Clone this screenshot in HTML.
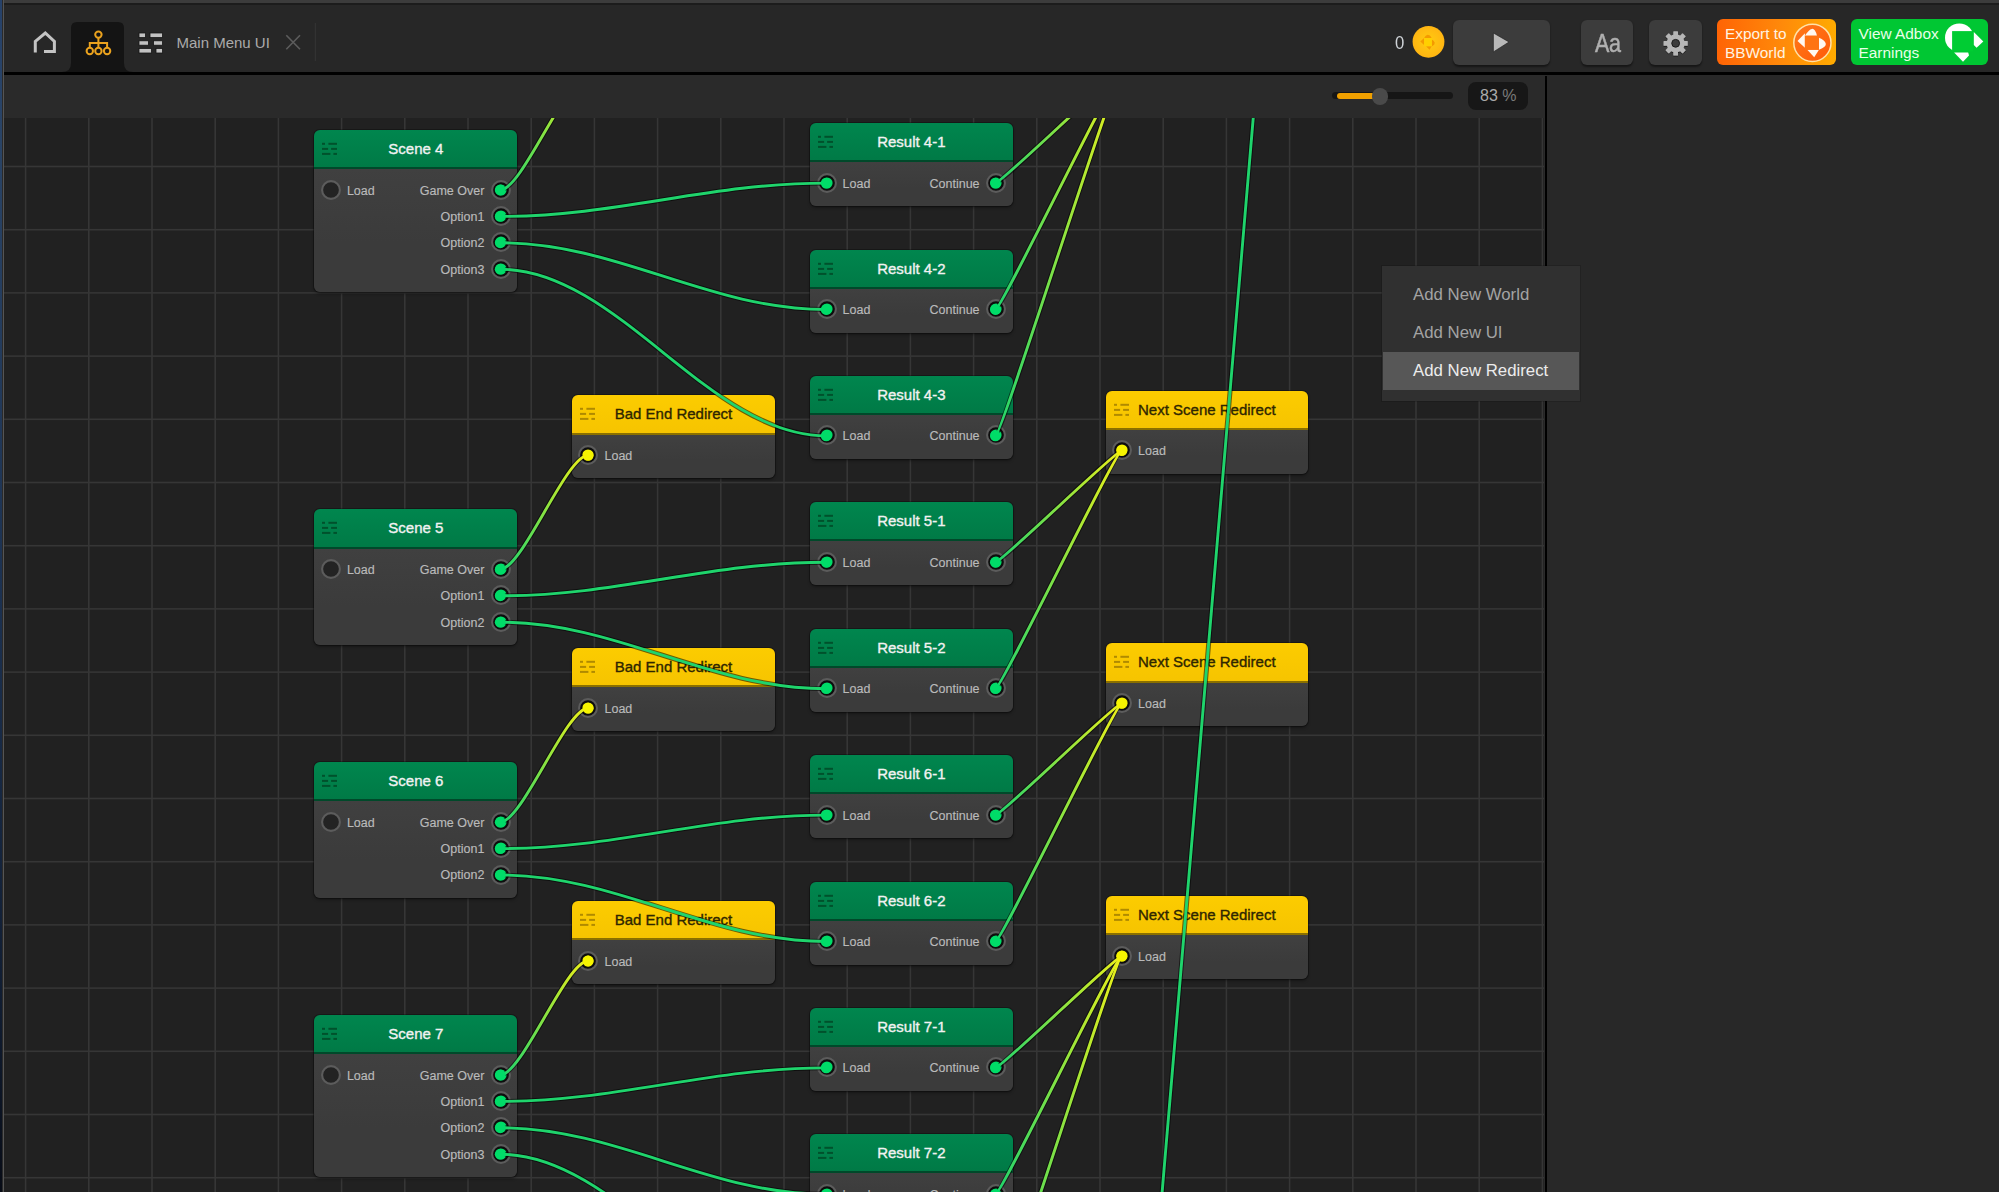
<!DOCTYPE html>
<html><head><meta charset="utf-8"><title>Mind Map</title>
<style>
*{margin:0;padding:0;box-sizing:border-box}
html,body{width:1999px;height:1192px;overflow:hidden;background:#2a2a2a;font-family:"Liberation Sans",sans-serif}
.abs{position:absolute}
#strip{left:0;top:0;width:2.4px;height:1192px;background:linear-gradient(#27426a,#2a4466 12%,#1c3150 50%,#101c30 85%,#080c16)}
#strip2{left:3px;top:0;width:1.4px;height:1192px;background:#555}
#topgray{left:4.4px;top:0;width:1995px;height:3px;background:#3c3c3c}
#topblk{left:4.4px;top:3px;width:1995px;height:2px;background:#1c1c1c}
#tb{left:4.4px;top:5px;width:1995px;height:67px;background:#272727}
#tbline{left:4.4px;top:72.4px;width:1995px;height:2.8px;background:#000}
#tb2{left:5px;top:75.2px;width:1540px;height:42px;background:#2a2a2a}
#vline{left:1544.5px;top:75.5px;width:2.5px;height:1117px;background:#000}
#rpanel{left:1547px;top:75.2px;width:452px;height:1117px;background:#282828}
#canvas{left:4.4px;top:117.5px;width:1540.1px;height:1075px;background:#212121;overflow:hidden}
.node{position:absolute;border-radius:6px;box-shadow:0 0 0 1px rgba(0,0,0,.28),0 2px 3px rgba(0,0,0,.35)}
.hdr{position:absolute;left:0;top:0;right:0;height:39.2px;border-radius:6px 6px 0 0;border-bottom:2px solid rgba(0,0,0,.45)}
.hdr.g{background:linear-gradient(#00864e,#007a46)}
.hdr.y{background:linear-gradient(#fccc00,#f6c400)}
.body{position:absolute;left:0;right:0;top:39.2px;bottom:0;border-radius:0 0 6px 6px;background:linear-gradient(#404040,#3b3b3b 60%)}
.ttl{position:absolute;left:0;right:0;top:0px;height:37px;line-height:37px;text-align:center;font-size:15px;white-space:nowrap}
.g .ttl{color:#f2f2f2}
.ttl.g{color:#f2f2f2;-webkit-text-stroke:.35px #f2f2f2}
.ttl.y{color:#2e2600;-webkit-text-stroke:.35px #2e2600}
.lbl{position:absolute;font-size:12.5px;color:#bababa;white-space:nowrap;line-height:14px;-webkit-text-stroke:.15px #bababa}
.ico{position:absolute;left:8px;top:12px;width:15px;height:13px}
.menu{left:1381.5px;top:266px;width:198.5px;height:134.5px;background:#303030;box-shadow:0 0 0 1px rgba(0,0,0,.15)}
.mi{position:absolute;left:31.5px;font-size:16.8px;color:#a3a3a3;white-space:nowrap;line-height:20px}
.btn{position:absolute;border-radius:6px;background:#3c3c3c;box-shadow:0 1.5px 2px rgba(0,0,0,.45)}
</style></head><body>

<div id="strip" class="abs"></div><div id="strip2" class="abs"></div>
<div id="topgray" class="abs"></div><div id="topblk" class="abs"></div>
<div id="tb" class="abs"></div>
<svg class="abs" style="left:0;top:0" width="340" height="76" viewBox="0 0 340 76">
<path d="M62 72 Q71 72 71 63 L71 28 Q71 22 77 22 L118 22 Q124 22 124 28 L124 63 Q124 72 133 72 Z" fill="#141414"/>
<path d="M35.3 52.6 L35.3 41.4 L45.3 33 L54.4 41.4 L54.4 51.6 L44 51.6" fill="none" stroke="#c4c4c4" stroke-width="3" stroke-linejoin="miter"/>
<g stroke="#eaa21e" stroke-width="2" fill="none">
<circle cx="98.4" cy="34.6" r="3.2"/>
<path d="M98.4 37.8 V47.8 M89.8 47.8 V43 H107.1 V47.8"/>
<circle cx="89.8" cy="51" r="3.2"/><circle cx="98.4" cy="51" r="3.2"/><circle cx="107.1" cy="51" r="3.2"/>
</g>
<g fill="#c2c2c2" stroke="#151515" stroke-width="0.8">
<rect x="139" y="33" width="6.5" height="4.6"/><rect x="150" y="33" width="12.5" height="4.6"/>
<rect x="139" y="40.8" width="9.5" height="4.4"/><rect x="153.5" y="40.8" width="9" height="4.4"/>
<rect x="139" y="48.4" width="12.5" height="4.6"/><rect x="156" y="48.4" width="6.5" height="4.6"/>
</g>
<path d="M286.3 35.2 L300 49.2 M300 35.2 L286.3 49.2" stroke="#5c5c5c" stroke-width="1.6"/>
<rect x="314.8" y="23" width="1" height="38" fill="#363636"/>
</svg>
<div class="abs" style="left:176.5px;top:34px;font-size:15px;color:#ababab;line-height:18px;white-space:nowrap">Main Menu UI</div>
<div class="abs" style="left:1394.8px;top:31.5px;font-size:19px;color:#cfd3d8;line-height:22px;transform:scaleX(.88);transform-origin:0 0">0</div>
<svg class="abs" style="left:1410px;top:23px" width="38" height="38" viewBox="0 0 38 38">
<defs><radialGradient id="coin" cx="50%" cy="50%" r="50%"><stop offset="0" stop-color="#ffcc10"/><stop offset="1" stop-color="#ffb512"/></radialGradient></defs>
<circle cx="18.5" cy="18.8" r="15.9" fill="url(#coin)"/>
<g fill="#f39600" opacity=".9">
<path d="M14.1 15 L14.1 22 L10.3 18.5Z"/>
<path d="M14.1 15.1 L21.7 15.1 Q20 11.5 17.6 11.7 Q15.5 12 14.1 15.1Z"/>
<path d="M21.8 16.5 L21.8 23.2 Q25 22 24.6 19.5 Q24 17.5 21.8 16.5Z"/>
<path d="M16 23.2 L21.8 23.2 L19.5 26.7Z"/>
</g>
<rect x="14.1" y="15.1" width="7.7" height="8.1" fill="#ffd000"/>
</svg>
<div class="btn" style="left:1453px;top:19.5px;width:96.5px;height:45px"></div>
<svg class="abs" style="left:1490px;top:30px" width="24" height="26"><path d="M3.4 3 L19 12 L3.4 21.9Z" fill="#b8b8b8" stroke="#161616" stroke-width=".6"/></svg>
<div class="btn" style="left:1581px;top:19.5px;width:52px;height:45px"></div>
<div class="abs" style="left:1594.5px;top:29px;font-size:25px;color:#b0b0b0;line-height:28px;white-space:nowrap;letter-spacing:-0.3px;-webkit-text-stroke:.5px #b0b0b0;transform:scaleX(.86);transform-origin:0 0">Aa</div>
<div class="btn" style="left:1649px;top:19.5px;width:53px;height:45px"></div>
<svg class="abs" style="left:1655px;top:23px" width="42" height="42" viewBox="0 0 42 42">
<defs><filter id="gsh" x="-30%" y="-30%" width="160%" height="160%"><feDropShadow dx="0" dy="0.8" stdDeviation="0.7" flood-color="#000" flood-opacity=".75"/></filter></defs>
<g fill="#b6b6b6" filter="url(#gsh)" transform="translate(20.65 20.3)">
<circle r="9"/>
<rect x="-2.35" y="-12.1" width="4.7" height="24.2" rx=".5"/>
<rect x="-2.35" y="-12.1" width="4.7" height="24.2" rx=".5" transform="rotate(45)"/>
<rect x="-2.35" y="-12.1" width="4.7" height="24.2" rx=".5" transform="rotate(90)"/>
<rect x="-2.35" y="-12.1" width="4.7" height="24.2" rx=".5" transform="rotate(135)"/>
</g>
<circle cx="20.65" cy="20.3" r="3.9" fill="#3c3c3c" stroke="#1a1a1a" stroke-width="1"/>
</svg>
<div class="abs" style="left:1717px;top:19px;width:119px;height:46px;border-radius:6px;background:linear-gradient(90deg,#ff6405,#ff8a0a 55%,#ffab00)"></div>
<div class="abs" style="left:1725px;top:24px;font-size:15.4px;line-height:19px;color:#fff3e2;white-space:nowrap">Export to<br>BBWorld</div>
<svg class="abs" style="left:1790px;top:20px" width="46" height="46" viewBox="0 0 46 46">
<defs><linearGradient id="eg" x1="0" y1="0" x2="1" y2="1"><stop offset="0" stop-color="#ff7a1a"/><stop offset="1" stop-color="#ff5a08"/></linearGradient></defs>
<circle cx="22.4" cy="22.8" r="18.6" fill="url(#eg)" stroke="#ffe2a8" stroke-width="1.5"/>
<g fill="#fff8f0">
<path d="M14.9 13.3 L14.9 27.8 L7.5 20.9Z"/>
<path d="M14.9 15.7 L27 15.7 Q25 8.2 21.8 8.9 Q19 9.3 14.9 15.7Z"/>
<path d="M29 17.7 L29 29.8 Q36.5 27 35.8 23.8 Q35 20 29 17.7Z"/>
<path d="M17.3 29.8 L29 29.8 L24.2 37.3Z"/>
</g>
<rect x="14.9" y="15.7" width="14.1" height="14.1" fill="#ff7412"/>
</svg>
<div class="abs" style="left:1851px;top:19.3px;width:137px;height:45.5px;border-radius:6px;background:#00c733"></div>
<div class="abs" style="left:1858.5px;top:24px;font-size:15.4px;line-height:19px;color:#e8ffe8;white-space:nowrap">View Adbox<br>Earnings</div>
<svg class="abs" style="left:1940px;top:18px" width="52" height="48" viewBox="0 0 52 48">
<defs><clipPath id="adc"><rect x="0" y="0" width="32.2" height="32.6"/></clipPath></defs>
<circle cx="19.3" cy="19.7" r="14.3" fill="#fff" clip-path="url(#adc)"/>
<rect x="12.1" y="13.1" width="20.9" height="20.3" fill="#00cc33"/>
<path d="M33.8 14.1 L43.3 23.6 L36.6 29.8 L33.8 27Z" fill="#fff"/>
<path d="M14.1 34.4 L28.2 34.4 L29 37.5 L23 43.7Z" fill="#fff"/>
</svg>
<div id="tbline" class="abs"></div>
<div id="tb2" class="abs"></div>
<div id="rpanel" class="abs"></div>
<div class="abs" style="left:1331.5px;top:92.2px;width:121px;height:6.6px;border-radius:4px;background:#161616"></div>
<div class="abs" style="left:1337px;top:92.6px;width:38px;height:6.6px;border-radius:3.5px;background:#f0a000"></div>
<div class="abs" style="left:1371.6px;top:88px;width:16.8px;height:16.8px;border-radius:50%;background:#4a4a4a"></div>
<div class="abs" style="left:1468.3px;top:82px;width:60px;height:28.2px;border-radius:8px;background:#171717"></div>
<div class="abs" style="left:1480px;top:87px;font-size:16px;line-height:18px;white-space:nowrap;color:#ababab">83 <span style="color:#7a7a7a">%</span></div>

<div id="canvas" class="abs">
<svg class="abs" style="left:0;top:0" width="1540" height="1075"><rect x="20.8" y="0" width="1.6" height="1075" fill="#363636"/><rect x="84" y="0" width="1.6" height="1075" fill="#363636"/><rect x="147.2" y="0" width="1.6" height="1075" fill="#363636"/><rect x="210.4" y="0" width="1.6" height="1075" fill="#363636"/><rect x="273.6" y="0" width="1.6" height="1075" fill="#363636"/><rect x="336.8" y="0" width="1.6" height="1075" fill="#363636"/><rect x="400" y="0" width="1.6" height="1075" fill="#363636"/><rect x="463.2" y="0" width="1.6" height="1075" fill="#363636"/><rect x="526.4" y="0" width="1.6" height="1075" fill="#363636"/><rect x="589.6" y="0" width="1.6" height="1075" fill="#363636"/><rect x="652.8" y="0" width="1.6" height="1075" fill="#363636"/><rect x="716" y="0" width="1.6" height="1075" fill="#363636"/><rect x="779.2" y="0" width="1.6" height="1075" fill="#363636"/><rect x="842.4" y="0" width="1.6" height="1075" fill="#363636"/><rect x="905.6" y="0" width="1.6" height="1075" fill="#363636"/><rect x="968.8" y="0" width="1.6" height="1075" fill="#363636"/><rect x="1032" y="0" width="1.6" height="1075" fill="#363636"/><rect x="1095.2" y="0" width="1.6" height="1075" fill="#363636"/><rect x="1158.4" y="0" width="1.6" height="1075" fill="#363636"/><rect x="1221.6" y="0" width="1.6" height="1075" fill="#363636"/><rect x="1284.8" y="0" width="1.6" height="1075" fill="#363636"/><rect x="1348" y="0" width="1.6" height="1075" fill="#363636"/><rect x="1411.2" y="0" width="1.6" height="1075" fill="#363636"/><rect x="1474.4" y="0" width="1.6" height="1075" fill="#363636"/><rect x="1537.6" y="0" width="1.6" height="1075" fill="#363636"/><rect x="0" y="47.7" width="1540" height="1.6" fill="#363636"/><rect x="0" y="110.9" width="1540" height="1.6" fill="#363636"/><rect x="0" y="174.1" width="1540" height="1.6" fill="#363636"/><rect x="0" y="237.3" width="1540" height="1.6" fill="#363636"/><rect x="0" y="300.5" width="1540" height="1.6" fill="#363636"/><rect x="0" y="363.7" width="1540" height="1.6" fill="#363636"/><rect x="0" y="426.9" width="1540" height="1.6" fill="#363636"/><rect x="0" y="490.1" width="1540" height="1.6" fill="#363636"/><rect x="0" y="553.3" width="1540" height="1.6" fill="#363636"/><rect x="0" y="616.5" width="1540" height="1.6" fill="#363636"/><rect x="0" y="679.7" width="1540" height="1.6" fill="#363636"/><rect x="0" y="742.9" width="1540" height="1.6" fill="#363636"/><rect x="0" y="806.1" width="1540" height="1.6" fill="#363636"/><rect x="0" y="869.3" width="1540" height="1.6" fill="#363636"/><rect x="0" y="932.5" width="1540" height="1.6" fill="#363636"/><rect x="0" y="995.7" width="1540" height="1.6" fill="#363636"/><rect x="0" y="1058.9" width="1540" height="1.6" fill="#363636"/></svg>
<div class="node" style="left:310px;top:12.5px;width:203px;height:162.2px">
<div class="hdr g">
<svg class="ico" viewBox="0 0 15 13"><g fill="#00512c"><rect x="0" y="0.8" width="3" height="2"/><rect x="6.4" y="0.8" width="8.7" height="2"/><rect x="0" y="5.9" width="6.1" height="2"/><rect x="9.1" y="5.9" width="6" height="2"/><rect x="0" y="10.9" width="8.4" height="2"/><rect x="11.4" y="10.9" width="3.7" height="2"/></g></svg>
<div class="ttl g">Scene 4</div>
</div><div class="body"></div>
<div class="lbl" style="left:32.5px;top:53.5px">Load</div>
<div class="lbl" style="right:33px;top:53.5px">Game Over</div>
<div class="lbl" style="right:33px;top:79.9px">Option1</div>
<div class="lbl" style="right:33px;top:106.3px">Option2</div>
<div class="lbl" style="right:33px;top:132.7px">Option3</div>
</div>
<div class="node" style="left:310px;top:391.9px;width:203px;height:135.8px">
<div class="hdr g">
<svg class="ico" viewBox="0 0 15 13"><g fill="#00512c"><rect x="0" y="0.8" width="3" height="2"/><rect x="6.4" y="0.8" width="8.7" height="2"/><rect x="0" y="5.9" width="6.1" height="2"/><rect x="9.1" y="5.9" width="6" height="2"/><rect x="0" y="10.9" width="8.4" height="2"/><rect x="11.4" y="10.9" width="3.7" height="2"/></g></svg>
<div class="ttl g">Scene 5</div>
</div><div class="body"></div>
<div class="lbl" style="left:32.5px;top:53.5px">Load</div>
<div class="lbl" style="right:33px;top:53.5px">Game Over</div>
<div class="lbl" style="right:33px;top:79.9px">Option1</div>
<div class="lbl" style="right:33px;top:106.3px">Option2</div>
</div>
<div class="node" style="left:310px;top:644.7px;width:203px;height:135.8px">
<div class="hdr g">
<svg class="ico" viewBox="0 0 15 13"><g fill="#00512c"><rect x="0" y="0.8" width="3" height="2"/><rect x="6.4" y="0.8" width="8.7" height="2"/><rect x="0" y="5.9" width="6.1" height="2"/><rect x="9.1" y="5.9" width="6" height="2"/><rect x="0" y="10.9" width="8.4" height="2"/><rect x="11.4" y="10.9" width="3.7" height="2"/></g></svg>
<div class="ttl g">Scene 6</div>
</div><div class="body"></div>
<div class="lbl" style="left:32.5px;top:53.5px">Load</div>
<div class="lbl" style="right:33px;top:53.5px">Game Over</div>
<div class="lbl" style="right:33px;top:79.9px">Option1</div>
<div class="lbl" style="right:33px;top:106.3px">Option2</div>
</div>
<div class="node" style="left:310px;top:897.5px;width:203px;height:162.2px">
<div class="hdr g">
<svg class="ico" viewBox="0 0 15 13"><g fill="#00512c"><rect x="0" y="0.8" width="3" height="2"/><rect x="6.4" y="0.8" width="8.7" height="2"/><rect x="0" y="5.9" width="6.1" height="2"/><rect x="9.1" y="5.9" width="6" height="2"/><rect x="0" y="10.9" width="8.4" height="2"/><rect x="11.4" y="10.9" width="3.7" height="2"/></g></svg>
<div class="ttl g">Scene 7</div>
</div><div class="body"></div>
<div class="lbl" style="left:32.5px;top:53.5px">Load</div>
<div class="lbl" style="right:33px;top:53.5px">Game Over</div>
<div class="lbl" style="right:33px;top:79.9px">Option1</div>
<div class="lbl" style="right:33px;top:106.3px">Option2</div>
<div class="lbl" style="right:33px;top:132.7px">Option3</div>
</div>
<div class="node" style="left:567.6px;top:277.9px;width:203px;height:83px">
<div class="hdr y">
<svg class="ico" viewBox="0 0 15 13"><g fill="#b08a00"><rect x="0" y="0.8" width="3" height="2"/><rect x="6.4" y="0.8" width="8.7" height="2"/><rect x="0" y="5.9" width="6.1" height="2"/><rect x="9.1" y="5.9" width="6" height="2"/><rect x="0" y="10.9" width="8.4" height="2"/><rect x="11.4" y="10.9" width="3.7" height="2"/></g></svg>
<div class="ttl y">Bad End Redirect</div>
</div><div class="body"></div>
<div class="lbl" style="left:32.5px;top:53.5px">Load</div>
</div>
<div class="node" style="left:567.6px;top:530.7px;width:203px;height:83px">
<div class="hdr y">
<svg class="ico" viewBox="0 0 15 13"><g fill="#b08a00"><rect x="0" y="0.8" width="3" height="2"/><rect x="6.4" y="0.8" width="8.7" height="2"/><rect x="0" y="5.9" width="6.1" height="2"/><rect x="9.1" y="5.9" width="6" height="2"/><rect x="0" y="10.9" width="8.4" height="2"/><rect x="11.4" y="10.9" width="3.7" height="2"/></g></svg>
<div class="ttl y">Bad End Redirect</div>
</div><div class="body"></div>
<div class="lbl" style="left:32.5px;top:53.5px">Load</div>
</div>
<div class="node" style="left:567.6px;top:783.5px;width:203px;height:83px">
<div class="hdr y">
<svg class="ico" viewBox="0 0 15 13"><g fill="#b08a00"><rect x="0" y="0.8" width="3" height="2"/><rect x="6.4" y="0.8" width="8.7" height="2"/><rect x="0" y="5.9" width="6.1" height="2"/><rect x="9.1" y="5.9" width="6" height="2"/><rect x="0" y="10.9" width="8.4" height="2"/><rect x="11.4" y="10.9" width="3.7" height="2"/></g></svg>
<div class="ttl y">Bad End Redirect</div>
</div><div class="body"></div>
<div class="lbl" style="left:32.5px;top:53.5px">Load</div>
</div>
<div class="node" style="left:805.7px;top:5.6px;width:202.5px;height:83px">
<div class="hdr g">
<svg class="ico" viewBox="0 0 15 13"><g fill="#00512c"><rect x="0" y="0.8" width="3" height="2"/><rect x="6.4" y="0.8" width="8.7" height="2"/><rect x="0" y="5.9" width="6.1" height="2"/><rect x="9.1" y="5.9" width="6" height="2"/><rect x="0" y="10.9" width="8.4" height="2"/><rect x="11.4" y="10.9" width="3.7" height="2"/></g></svg>
<div class="ttl g">Result 4-1</div>
</div><div class="body"></div>
<div class="lbl" style="left:32.5px;top:53.5px">Load</div>
<div class="lbl" style="right:33px;top:53.5px">Continue</div>
</div>
<div class="node" style="left:805.7px;top:132px;width:202.5px;height:83px">
<div class="hdr g">
<svg class="ico" viewBox="0 0 15 13"><g fill="#00512c"><rect x="0" y="0.8" width="3" height="2"/><rect x="6.4" y="0.8" width="8.7" height="2"/><rect x="0" y="5.9" width="6.1" height="2"/><rect x="9.1" y="5.9" width="6" height="2"/><rect x="0" y="10.9" width="8.4" height="2"/><rect x="11.4" y="10.9" width="3.7" height="2"/></g></svg>
<div class="ttl g">Result 4-2</div>
</div><div class="body"></div>
<div class="lbl" style="left:32.5px;top:53.5px">Load</div>
<div class="lbl" style="right:33px;top:53.5px">Continue</div>
</div>
<div class="node" style="left:805.7px;top:258.4px;width:202.5px;height:83px">
<div class="hdr g">
<svg class="ico" viewBox="0 0 15 13"><g fill="#00512c"><rect x="0" y="0.8" width="3" height="2"/><rect x="6.4" y="0.8" width="8.7" height="2"/><rect x="0" y="5.9" width="6.1" height="2"/><rect x="9.1" y="5.9" width="6" height="2"/><rect x="0" y="10.9" width="8.4" height="2"/><rect x="11.4" y="10.9" width="3.7" height="2"/></g></svg>
<div class="ttl g">Result 4-3</div>
</div><div class="body"></div>
<div class="lbl" style="left:32.5px;top:53.5px">Load</div>
<div class="lbl" style="right:33px;top:53.5px">Continue</div>
</div>
<div class="node" style="left:805.7px;top:384.8px;width:202.5px;height:83px">
<div class="hdr g">
<svg class="ico" viewBox="0 0 15 13"><g fill="#00512c"><rect x="0" y="0.8" width="3" height="2"/><rect x="6.4" y="0.8" width="8.7" height="2"/><rect x="0" y="5.9" width="6.1" height="2"/><rect x="9.1" y="5.9" width="6" height="2"/><rect x="0" y="10.9" width="8.4" height="2"/><rect x="11.4" y="10.9" width="3.7" height="2"/></g></svg>
<div class="ttl g">Result 5-1</div>
</div><div class="body"></div>
<div class="lbl" style="left:32.5px;top:53.5px">Load</div>
<div class="lbl" style="right:33px;top:53.5px">Continue</div>
</div>
<div class="node" style="left:805.7px;top:511.2px;width:202.5px;height:83px">
<div class="hdr g">
<svg class="ico" viewBox="0 0 15 13"><g fill="#00512c"><rect x="0" y="0.8" width="3" height="2"/><rect x="6.4" y="0.8" width="8.7" height="2"/><rect x="0" y="5.9" width="6.1" height="2"/><rect x="9.1" y="5.9" width="6" height="2"/><rect x="0" y="10.9" width="8.4" height="2"/><rect x="11.4" y="10.9" width="3.7" height="2"/></g></svg>
<div class="ttl g">Result 5-2</div>
</div><div class="body"></div>
<div class="lbl" style="left:32.5px;top:53.5px">Load</div>
<div class="lbl" style="right:33px;top:53.5px">Continue</div>
</div>
<div class="node" style="left:805.7px;top:637.6px;width:202.5px;height:83px">
<div class="hdr g">
<svg class="ico" viewBox="0 0 15 13"><g fill="#00512c"><rect x="0" y="0.8" width="3" height="2"/><rect x="6.4" y="0.8" width="8.7" height="2"/><rect x="0" y="5.9" width="6.1" height="2"/><rect x="9.1" y="5.9" width="6" height="2"/><rect x="0" y="10.9" width="8.4" height="2"/><rect x="11.4" y="10.9" width="3.7" height="2"/></g></svg>
<div class="ttl g">Result 6-1</div>
</div><div class="body"></div>
<div class="lbl" style="left:32.5px;top:53.5px">Load</div>
<div class="lbl" style="right:33px;top:53.5px">Continue</div>
</div>
<div class="node" style="left:805.7px;top:764px;width:202.5px;height:83px">
<div class="hdr g">
<svg class="ico" viewBox="0 0 15 13"><g fill="#00512c"><rect x="0" y="0.8" width="3" height="2"/><rect x="6.4" y="0.8" width="8.7" height="2"/><rect x="0" y="5.9" width="6.1" height="2"/><rect x="9.1" y="5.9" width="6" height="2"/><rect x="0" y="10.9" width="8.4" height="2"/><rect x="11.4" y="10.9" width="3.7" height="2"/></g></svg>
<div class="ttl g">Result 6-2</div>
</div><div class="body"></div>
<div class="lbl" style="left:32.5px;top:53.5px">Load</div>
<div class="lbl" style="right:33px;top:53.5px">Continue</div>
</div>
<div class="node" style="left:805.7px;top:890.4px;width:202.5px;height:83px">
<div class="hdr g">
<svg class="ico" viewBox="0 0 15 13"><g fill="#00512c"><rect x="0" y="0.8" width="3" height="2"/><rect x="6.4" y="0.8" width="8.7" height="2"/><rect x="0" y="5.9" width="6.1" height="2"/><rect x="9.1" y="5.9" width="6" height="2"/><rect x="0" y="10.9" width="8.4" height="2"/><rect x="11.4" y="10.9" width="3.7" height="2"/></g></svg>
<div class="ttl g">Result 7-1</div>
</div><div class="body"></div>
<div class="lbl" style="left:32.5px;top:53.5px">Load</div>
<div class="lbl" style="right:33px;top:53.5px">Continue</div>
</div>
<div class="node" style="left:805.7px;top:1016.8px;width:202.5px;height:83px">
<div class="hdr g">
<svg class="ico" viewBox="0 0 15 13"><g fill="#00512c"><rect x="0" y="0.8" width="3" height="2"/><rect x="6.4" y="0.8" width="8.7" height="2"/><rect x="0" y="5.9" width="6.1" height="2"/><rect x="9.1" y="5.9" width="6" height="2"/><rect x="0" y="10.9" width="8.4" height="2"/><rect x="11.4" y="10.9" width="3.7" height="2"/></g></svg>
<div class="ttl g">Result 7-2</div>
</div><div class="body"></div>
<div class="lbl" style="left:32.5px;top:53.5px">Load</div>
<div class="lbl" style="right:33px;top:53.5px">Continue</div>
</div>
<div class="node" style="left:1101.2px;top:273.1px;width:202.5px;height:83px">
<div class="hdr y">
<svg class="ico" viewBox="0 0 15 13"><g fill="#b08a00"><rect x="0" y="0.8" width="3" height="2"/><rect x="6.4" y="0.8" width="8.7" height="2"/><rect x="0" y="5.9" width="6.1" height="2"/><rect x="9.1" y="5.9" width="6" height="2"/><rect x="0" y="10.9" width="8.4" height="2"/><rect x="11.4" y="10.9" width="3.7" height="2"/></g></svg>
<div class="ttl y">Next Scene Redirect</div>
</div><div class="body"></div>
<div class="lbl" style="left:32.5px;top:53.5px">Load</div>
</div>
<div class="node" style="left:1101.2px;top:525.9px;width:202.5px;height:83px">
<div class="hdr y">
<svg class="ico" viewBox="0 0 15 13"><g fill="#b08a00"><rect x="0" y="0.8" width="3" height="2"/><rect x="6.4" y="0.8" width="8.7" height="2"/><rect x="0" y="5.9" width="6.1" height="2"/><rect x="9.1" y="5.9" width="6" height="2"/><rect x="0" y="10.9" width="8.4" height="2"/><rect x="11.4" y="10.9" width="3.7" height="2"/></g></svg>
<div class="ttl y">Next Scene Redirect</div>
</div><div class="body"></div>
<div class="lbl" style="left:32.5px;top:53.5px">Load</div>
</div>
<div class="node" style="left:1101.2px;top:778.7px;width:202.5px;height:83px">
<div class="hdr y">
<svg class="ico" viewBox="0 0 15 13"><g fill="#b08a00"><rect x="0" y="0.8" width="3" height="2"/><rect x="6.4" y="0.8" width="8.7" height="2"/><rect x="0" y="5.9" width="6.1" height="2"/><rect x="9.1" y="5.9" width="6" height="2"/><rect x="0" y="10.9" width="8.4" height="2"/><rect x="11.4" y="10.9" width="3.7" height="2"/></g></svg>
<div class="ttl y">Next Scene Redirect</div>
</div><div class="body"></div>
<div class="lbl" style="left:32.5px;top:53.5px">Load</div>
</div>
<svg class="abs" style="left:314.5px;top:60px" width="24" height="24" viewBox="0 0 24 24"><circle cx="12" cy="12" r="8.9" fill="#232323" stroke="#5c5c5c" stroke-width="2.1"/></svg>
<svg class="abs" style="left:484.2px;top:60px" width="24" height="24" viewBox="0 0 24 24"><circle cx="12" cy="12" r="8.9" fill="#0d0d0d" stroke="#5c5c5c" stroke-width="2.1"/><circle cx="12" cy="12" r="5.6" fill="#00dc68"/></svg>
<svg class="abs" style="left:484.2px;top:86.4px" width="24" height="24" viewBox="0 0 24 24"><circle cx="12" cy="12" r="8.9" fill="#0d0d0d" stroke="#5c5c5c" stroke-width="2.1"/><circle cx="12" cy="12" r="5.6" fill="#00dc68"/></svg>
<svg class="abs" style="left:484.2px;top:112.8px" width="24" height="24" viewBox="0 0 24 24"><circle cx="12" cy="12" r="8.9" fill="#0d0d0d" stroke="#5c5c5c" stroke-width="2.1"/><circle cx="12" cy="12" r="5.6" fill="#00dc68"/></svg>
<svg class="abs" style="left:484.2px;top:139.2px" width="24" height="24" viewBox="0 0 24 24"><circle cx="12" cy="12" r="8.9" fill="#0d0d0d" stroke="#5c5c5c" stroke-width="2.1"/><circle cx="12" cy="12" r="5.6" fill="#00dc68"/></svg>
<svg class="abs" style="left:314.5px;top:439.4px" width="24" height="24" viewBox="0 0 24 24"><circle cx="12" cy="12" r="8.9" fill="#232323" stroke="#5c5c5c" stroke-width="2.1"/></svg>
<svg class="abs" style="left:484.2px;top:439.4px" width="24" height="24" viewBox="0 0 24 24"><circle cx="12" cy="12" r="8.9" fill="#0d0d0d" stroke="#5c5c5c" stroke-width="2.1"/><circle cx="12" cy="12" r="5.6" fill="#00dc68"/></svg>
<svg class="abs" style="left:484.2px;top:465.8px" width="24" height="24" viewBox="0 0 24 24"><circle cx="12" cy="12" r="8.9" fill="#0d0d0d" stroke="#5c5c5c" stroke-width="2.1"/><circle cx="12" cy="12" r="5.6" fill="#00dc68"/></svg>
<svg class="abs" style="left:484.2px;top:492.2px" width="24" height="24" viewBox="0 0 24 24"><circle cx="12" cy="12" r="8.9" fill="#0d0d0d" stroke="#5c5c5c" stroke-width="2.1"/><circle cx="12" cy="12" r="5.6" fill="#00dc68"/></svg>
<svg class="abs" style="left:314.5px;top:692.2px" width="24" height="24" viewBox="0 0 24 24"><circle cx="12" cy="12" r="8.9" fill="#232323" stroke="#5c5c5c" stroke-width="2.1"/></svg>
<svg class="abs" style="left:484.2px;top:692.2px" width="24" height="24" viewBox="0 0 24 24"><circle cx="12" cy="12" r="8.9" fill="#0d0d0d" stroke="#5c5c5c" stroke-width="2.1"/><circle cx="12" cy="12" r="5.6" fill="#00dc68"/></svg>
<svg class="abs" style="left:484.2px;top:718.6px" width="24" height="24" viewBox="0 0 24 24"><circle cx="12" cy="12" r="8.9" fill="#0d0d0d" stroke="#5c5c5c" stroke-width="2.1"/><circle cx="12" cy="12" r="5.6" fill="#00dc68"/></svg>
<svg class="abs" style="left:484.2px;top:745px" width="24" height="24" viewBox="0 0 24 24"><circle cx="12" cy="12" r="8.9" fill="#0d0d0d" stroke="#5c5c5c" stroke-width="2.1"/><circle cx="12" cy="12" r="5.6" fill="#00dc68"/></svg>
<svg class="abs" style="left:314.5px;top:945px" width="24" height="24" viewBox="0 0 24 24"><circle cx="12" cy="12" r="8.9" fill="#232323" stroke="#5c5c5c" stroke-width="2.1"/></svg>
<svg class="abs" style="left:484.2px;top:945px" width="24" height="24" viewBox="0 0 24 24"><circle cx="12" cy="12" r="8.9" fill="#0d0d0d" stroke="#5c5c5c" stroke-width="2.1"/><circle cx="12" cy="12" r="5.6" fill="#00dc68"/></svg>
<svg class="abs" style="left:484.2px;top:971.4px" width="24" height="24" viewBox="0 0 24 24"><circle cx="12" cy="12" r="8.9" fill="#0d0d0d" stroke="#5c5c5c" stroke-width="2.1"/><circle cx="12" cy="12" r="5.6" fill="#00dc68"/></svg>
<svg class="abs" style="left:484.2px;top:997.8px" width="24" height="24" viewBox="0 0 24 24"><circle cx="12" cy="12" r="8.9" fill="#0d0d0d" stroke="#5c5c5c" stroke-width="2.1"/><circle cx="12" cy="12" r="5.6" fill="#00dc68"/></svg>
<svg class="abs" style="left:484.2px;top:1024.2px" width="24" height="24" viewBox="0 0 24 24"><circle cx="12" cy="12" r="8.9" fill="#0d0d0d" stroke="#5c5c5c" stroke-width="2.1"/><circle cx="12" cy="12" r="5.6" fill="#00dc68"/></svg>
<svg class="abs" style="left:572.1px;top:325.4px" width="24" height="24" viewBox="0 0 24 24"><circle cx="12" cy="12" r="8.9" fill="#0d0d0d" stroke="#5c5c5c" stroke-width="2.1"/><circle cx="12" cy="12" r="5.6" fill="#f6f400"/></svg>
<svg class="abs" style="left:572.1px;top:578.2px" width="24" height="24" viewBox="0 0 24 24"><circle cx="12" cy="12" r="8.9" fill="#0d0d0d" stroke="#5c5c5c" stroke-width="2.1"/><circle cx="12" cy="12" r="5.6" fill="#f6f400"/></svg>
<svg class="abs" style="left:572.1px;top:831px" width="24" height="24" viewBox="0 0 24 24"><circle cx="12" cy="12" r="8.9" fill="#0d0d0d" stroke="#5c5c5c" stroke-width="2.1"/><circle cx="12" cy="12" r="5.6" fill="#f6f400"/></svg>
<svg class="abs" style="left:810.2px;top:53.1px" width="24" height="24" viewBox="0 0 24 24"><circle cx="12" cy="12" r="8.9" fill="#0d0d0d" stroke="#5c5c5c" stroke-width="2.1"/><circle cx="12" cy="12" r="5.6" fill="#00dc68"/></svg>
<svg class="abs" style="left:979.4px;top:53.1px" width="24" height="24" viewBox="0 0 24 24"><circle cx="12" cy="12" r="8.9" fill="#0d0d0d" stroke="#5c5c5c" stroke-width="2.1"/><circle cx="12" cy="12" r="5.6" fill="#00dc68"/></svg>
<svg class="abs" style="left:810.2px;top:179.5px" width="24" height="24" viewBox="0 0 24 24"><circle cx="12" cy="12" r="8.9" fill="#0d0d0d" stroke="#5c5c5c" stroke-width="2.1"/><circle cx="12" cy="12" r="5.6" fill="#00dc68"/></svg>
<svg class="abs" style="left:979.4px;top:179.5px" width="24" height="24" viewBox="0 0 24 24"><circle cx="12" cy="12" r="8.9" fill="#0d0d0d" stroke="#5c5c5c" stroke-width="2.1"/><circle cx="12" cy="12" r="5.6" fill="#00dc68"/></svg>
<svg class="abs" style="left:810.2px;top:305.9px" width="24" height="24" viewBox="0 0 24 24"><circle cx="12" cy="12" r="8.9" fill="#0d0d0d" stroke="#5c5c5c" stroke-width="2.1"/><circle cx="12" cy="12" r="5.6" fill="#00dc68"/></svg>
<svg class="abs" style="left:979.4px;top:305.9px" width="24" height="24" viewBox="0 0 24 24"><circle cx="12" cy="12" r="8.9" fill="#0d0d0d" stroke="#5c5c5c" stroke-width="2.1"/><circle cx="12" cy="12" r="5.6" fill="#00dc68"/></svg>
<svg class="abs" style="left:810.2px;top:432.3px" width="24" height="24" viewBox="0 0 24 24"><circle cx="12" cy="12" r="8.9" fill="#0d0d0d" stroke="#5c5c5c" stroke-width="2.1"/><circle cx="12" cy="12" r="5.6" fill="#00dc68"/></svg>
<svg class="abs" style="left:979.4px;top:432.3px" width="24" height="24" viewBox="0 0 24 24"><circle cx="12" cy="12" r="8.9" fill="#0d0d0d" stroke="#5c5c5c" stroke-width="2.1"/><circle cx="12" cy="12" r="5.6" fill="#00dc68"/></svg>
<svg class="abs" style="left:810.2px;top:558.7px" width="24" height="24" viewBox="0 0 24 24"><circle cx="12" cy="12" r="8.9" fill="#0d0d0d" stroke="#5c5c5c" stroke-width="2.1"/><circle cx="12" cy="12" r="5.6" fill="#00dc68"/></svg>
<svg class="abs" style="left:979.4px;top:558.7px" width="24" height="24" viewBox="0 0 24 24"><circle cx="12" cy="12" r="8.9" fill="#0d0d0d" stroke="#5c5c5c" stroke-width="2.1"/><circle cx="12" cy="12" r="5.6" fill="#00dc68"/></svg>
<svg class="abs" style="left:810.2px;top:685.1px" width="24" height="24" viewBox="0 0 24 24"><circle cx="12" cy="12" r="8.9" fill="#0d0d0d" stroke="#5c5c5c" stroke-width="2.1"/><circle cx="12" cy="12" r="5.6" fill="#00dc68"/></svg>
<svg class="abs" style="left:979.4px;top:685.1px" width="24" height="24" viewBox="0 0 24 24"><circle cx="12" cy="12" r="8.9" fill="#0d0d0d" stroke="#5c5c5c" stroke-width="2.1"/><circle cx="12" cy="12" r="5.6" fill="#00dc68"/></svg>
<svg class="abs" style="left:810.2px;top:811.5px" width="24" height="24" viewBox="0 0 24 24"><circle cx="12" cy="12" r="8.9" fill="#0d0d0d" stroke="#5c5c5c" stroke-width="2.1"/><circle cx="12" cy="12" r="5.6" fill="#00dc68"/></svg>
<svg class="abs" style="left:979.4px;top:811.5px" width="24" height="24" viewBox="0 0 24 24"><circle cx="12" cy="12" r="8.9" fill="#0d0d0d" stroke="#5c5c5c" stroke-width="2.1"/><circle cx="12" cy="12" r="5.6" fill="#00dc68"/></svg>
<svg class="abs" style="left:810.2px;top:937.9px" width="24" height="24" viewBox="0 0 24 24"><circle cx="12" cy="12" r="8.9" fill="#0d0d0d" stroke="#5c5c5c" stroke-width="2.1"/><circle cx="12" cy="12" r="5.6" fill="#00dc68"/></svg>
<svg class="abs" style="left:979.4px;top:937.9px" width="24" height="24" viewBox="0 0 24 24"><circle cx="12" cy="12" r="8.9" fill="#0d0d0d" stroke="#5c5c5c" stroke-width="2.1"/><circle cx="12" cy="12" r="5.6" fill="#00dc68"/></svg>
<svg class="abs" style="left:810.2px;top:1064.3px" width="24" height="24" viewBox="0 0 24 24"><circle cx="12" cy="12" r="8.9" fill="#0d0d0d" stroke="#5c5c5c" stroke-width="2.1"/><circle cx="12" cy="12" r="5.6" fill="#00dc68"/></svg>
<svg class="abs" style="left:979.4px;top:1064.3px" width="24" height="24" viewBox="0 0 24 24"><circle cx="12" cy="12" r="8.9" fill="#0d0d0d" stroke="#5c5c5c" stroke-width="2.1"/><circle cx="12" cy="12" r="5.6" fill="#00dc68"/></svg>
<svg class="abs" style="left:1105.7px;top:320.6px" width="24" height="24" viewBox="0 0 24 24"><circle cx="12" cy="12" r="8.9" fill="#0d0d0d" stroke="#5c5c5c" stroke-width="2.1"/><circle cx="12" cy="12" r="5.6" fill="#f6f400"/></svg>
<svg class="abs" style="left:1105.7px;top:573.4px" width="24" height="24" viewBox="0 0 24 24"><circle cx="12" cy="12" r="8.9" fill="#0d0d0d" stroke="#5c5c5c" stroke-width="2.1"/><circle cx="12" cy="12" r="5.6" fill="#f6f400"/></svg>
<svg class="abs" style="left:1105.7px;top:826.2px" width="24" height="24" viewBox="0 0 24 24"><circle cx="12" cy="12" r="8.9" fill="#0d0d0d" stroke="#5c5c5c" stroke-width="2.1"/><circle cx="12" cy="12" r="5.6" fill="#f6f400"/></svg>
<svg class="abs" style="left:0;top:0" width="1540" height="1075" viewBox="4.4 117.5 1540 1075"><defs><linearGradient id="e10" gradientUnits="userSpaceOnUse" x1="500.6" y1="189.5" x2="588.5" y2="75.7"><stop offset="0" stop-color="#1fd46c"/><stop offset="1" stop-color="#ecf01a"/></linearGradient><linearGradient id="e11" gradientUnits="userSpaceOnUse" x1="500.6" y1="568.9" x2="588.5" y2="454.9"><stop offset="0" stop-color="#1fd46c"/><stop offset="1" stop-color="#ecf01a"/></linearGradient><linearGradient id="e12" gradientUnits="userSpaceOnUse" x1="500.6" y1="821.7" x2="588.5" y2="707.7"><stop offset="0" stop-color="#1fd46c"/><stop offset="1" stop-color="#ecf01a"/></linearGradient><linearGradient id="e13" gradientUnits="userSpaceOnUse" x1="500.6" y1="1074.5" x2="588.5" y2="960.5"><stop offset="0" stop-color="#1fd46c"/><stop offset="1" stop-color="#ecf01a"/></linearGradient><linearGradient id="e14" gradientUnits="userSpaceOnUse" x1="995.8" y1="182.6" x2="1122.1" y2="70.9"><stop offset="0" stop-color="#1fd46c"/><stop offset="1" stop-color="#ecf01a"/></linearGradient><linearGradient id="e15" gradientUnits="userSpaceOnUse" x1="995.8" y1="309" x2="1122.1" y2="70.9"><stop offset="0" stop-color="#1fd46c"/><stop offset="1" stop-color="#ecf01a"/></linearGradient><linearGradient id="e16" gradientUnits="userSpaceOnUse" x1="995.8" y1="435.4" x2="1122.1" y2="70.9"><stop offset="0" stop-color="#1fd46c"/><stop offset="1" stop-color="#ecf01a"/></linearGradient><linearGradient id="e17" gradientUnits="userSpaceOnUse" x1="995.8" y1="561.8" x2="1122.1" y2="450.1"><stop offset="0" stop-color="#1fd46c"/><stop offset="1" stop-color="#ecf01a"/></linearGradient><linearGradient id="e18" gradientUnits="userSpaceOnUse" x1="995.8" y1="688.2" x2="1122.1" y2="450.1"><stop offset="0" stop-color="#1fd46c"/><stop offset="1" stop-color="#ecf01a"/></linearGradient><linearGradient id="e19" gradientUnits="userSpaceOnUse" x1="995.8" y1="814.6" x2="1122.1" y2="702.9"><stop offset="0" stop-color="#1fd46c"/><stop offset="1" stop-color="#ecf01a"/></linearGradient><linearGradient id="e20" gradientUnits="userSpaceOnUse" x1="995.8" y1="941" x2="1122.1" y2="702.9"><stop offset="0" stop-color="#1fd46c"/><stop offset="1" stop-color="#ecf01a"/></linearGradient><linearGradient id="e21" gradientUnits="userSpaceOnUse" x1="995.8" y1="1067.4" x2="1122.1" y2="955.7"><stop offset="0" stop-color="#1fd46c"/><stop offset="1" stop-color="#ecf01a"/></linearGradient><linearGradient id="e22" gradientUnits="userSpaceOnUse" x1="995.8" y1="1193.8" x2="1122.1" y2="955.7"><stop offset="0" stop-color="#1fd46c"/><stop offset="1" stop-color="#ecf01a"/></linearGradient><linearGradient id="e23" gradientUnits="userSpaceOnUse" x1="995.8" y1="1320.2" x2="1122.1" y2="955.7"><stop offset="0" stop-color="#1fd46c"/><stop offset="1" stop-color="#ecf01a"/></linearGradient></defs><path d="M500.6 215.9 C618.6 215.9 708.6 182.6 826.6 182.6" fill="none" stroke="#000" stroke-opacity=".55" stroke-width="4.9"/><path d="M500.6 242.3 C618.6 242.3 708.6 309 826.6 309" fill="none" stroke="#000" stroke-opacity=".55" stroke-width="4.9"/><path d="M500.6 268.7 C618.6 268.7 708.6 435.4 826.6 435.4" fill="none" stroke="#000" stroke-opacity=".55" stroke-width="4.9"/><path d="M500.6 595.3 C618.6 595.3 708.6 561.8 826.6 561.8" fill="none" stroke="#000" stroke-opacity=".55" stroke-width="4.9"/><path d="M500.6 621.7 C618.6 621.7 708.6 688.2 826.6 688.2" fill="none" stroke="#000" stroke-opacity=".55" stroke-width="4.9"/><path d="M500.6 848.1 C618.6 848.1 708.6 814.6 826.6 814.6" fill="none" stroke="#000" stroke-opacity=".55" stroke-width="4.9"/><path d="M500.6 874.5 C618.6 874.5 708.6 941 826.6 941" fill="none" stroke="#000" stroke-opacity=".55" stroke-width="4.9"/><path d="M500.6 1100.9 C618.6 1100.9 708.6 1067.4 826.6 1067.4" fill="none" stroke="#000" stroke-opacity=".55" stroke-width="4.9"/><path d="M500.6 1127.3 C618.6 1127.3 708.6 1193.8 826.6 1193.8" fill="none" stroke="#000" stroke-opacity=".55" stroke-width="4.9"/><path d="M500.6 1153.7 C618.6 1153.7 708.6 1320.2 826.6 1320.2" fill="none" stroke="#000" stroke-opacity=".55" stroke-width="4.9"/><path d="M500.6 189.5 C522.6 189.5 566.5 75.7 588.5 75.7" fill="none" stroke="#000" stroke-opacity=".55" stroke-width="4.9"/><path d="M500.6 568.9 C522.6 568.9 566.5 454.9 588.5 454.9" fill="none" stroke="#000" stroke-opacity=".55" stroke-width="4.9"/><path d="M500.6 821.7 C522.6 821.7 566.5 707.7 588.5 707.7" fill="none" stroke="#000" stroke-opacity=".55" stroke-width="4.9"/><path d="M500.6 1074.5 C522.6 1074.5 566.5 960.5 588.5 960.5" fill="none" stroke="#000" stroke-opacity=".55" stroke-width="4.9"/><path d="M995.8 182.6 C1001.8 182.6 1116.1 70.9 1122.1 70.9" fill="none" stroke="#000" stroke-opacity=".55" stroke-width="4.9"/><path d="M995.8 309 C1001.8 309 1116.1 70.9 1122.1 70.9" fill="none" stroke="#000" stroke-opacity=".55" stroke-width="4.9"/><path d="M995.8 435.4 C1001.8 435.4 1116.1 70.9 1122.1 70.9" fill="none" stroke="#000" stroke-opacity=".55" stroke-width="4.9"/><path d="M995.8 561.8 C1001.8 561.8 1116.1 450.1 1122.1 450.1" fill="none" stroke="#000" stroke-opacity=".55" stroke-width="4.9"/><path d="M995.8 688.2 C1001.8 688.2 1116.1 450.1 1122.1 450.1" fill="none" stroke="#000" stroke-opacity=".55" stroke-width="4.9"/><path d="M995.8 814.6 C1001.8 814.6 1116.1 702.9 1122.1 702.9" fill="none" stroke="#000" stroke-opacity=".55" stroke-width="4.9"/><path d="M995.8 941 C1001.8 941 1116.1 702.9 1122.1 702.9" fill="none" stroke="#000" stroke-opacity=".55" stroke-width="4.9"/><path d="M995.8 1067.4 C1001.8 1067.4 1116.1 955.7 1122.1 955.7" fill="none" stroke="#000" stroke-opacity=".55" stroke-width="4.9"/><path d="M995.8 1193.8 C1001.8 1193.8 1116.1 955.7 1122.1 955.7" fill="none" stroke="#000" stroke-opacity=".55" stroke-width="4.9"/><path d="M995.8 1320.2 C1001.8 1320.2 1116.1 955.7 1122.1 955.7" fill="none" stroke="#000" stroke-opacity=".55" stroke-width="4.9"/><path d="M1258.15 64.3 L1157.94 1245.7" fill="none" stroke="#000" stroke-opacity=".55" stroke-width="4.9"/><path d="M500.6 215.9 C618.6 215.9 708.6 182.6 826.6 182.6" fill="none" stroke="#1fd46c" stroke-width="2.9"/><path d="M500.6 242.3 C618.6 242.3 708.6 309 826.6 309" fill="none" stroke="#1fd46c" stroke-width="2.9"/><path d="M500.6 268.7 C618.6 268.7 708.6 435.4 826.6 435.4" fill="none" stroke="#1fd46c" stroke-width="2.9"/><path d="M500.6 595.3 C618.6 595.3 708.6 561.8 826.6 561.8" fill="none" stroke="#1fd46c" stroke-width="2.9"/><path d="M500.6 621.7 C618.6 621.7 708.6 688.2 826.6 688.2" fill="none" stroke="#1fd46c" stroke-width="2.9"/><path d="M500.6 848.1 C618.6 848.1 708.6 814.6 826.6 814.6" fill="none" stroke="#1fd46c" stroke-width="2.9"/><path d="M500.6 874.5 C618.6 874.5 708.6 941 826.6 941" fill="none" stroke="#1fd46c" stroke-width="2.9"/><path d="M500.6 1100.9 C618.6 1100.9 708.6 1067.4 826.6 1067.4" fill="none" stroke="#1fd46c" stroke-width="2.9"/><path d="M500.6 1127.3 C618.6 1127.3 708.6 1193.8 826.6 1193.8" fill="none" stroke="#1fd46c" stroke-width="2.9"/><path d="M500.6 1153.7 C618.6 1153.7 708.6 1320.2 826.6 1320.2" fill="none" stroke="#1fd46c" stroke-width="2.9"/><path d="M500.6 189.5 C522.6 189.5 566.5 75.7 588.5 75.7" fill="none" stroke="url(#e10)" stroke-width="2.9"/><path d="M500.6 568.9 C522.6 568.9 566.5 454.9 588.5 454.9" fill="none" stroke="url(#e11)" stroke-width="2.9"/><path d="M500.6 821.7 C522.6 821.7 566.5 707.7 588.5 707.7" fill="none" stroke="url(#e12)" stroke-width="2.9"/><path d="M500.6 1074.5 C522.6 1074.5 566.5 960.5 588.5 960.5" fill="none" stroke="url(#e13)" stroke-width="2.9"/><path d="M995.8 182.6 C1001.8 182.6 1116.1 70.9 1122.1 70.9" fill="none" stroke="url(#e14)" stroke-width="2.9"/><path d="M995.8 309 C1001.8 309 1116.1 70.9 1122.1 70.9" fill="none" stroke="url(#e15)" stroke-width="2.9"/><path d="M995.8 435.4 C1001.8 435.4 1116.1 70.9 1122.1 70.9" fill="none" stroke="url(#e16)" stroke-width="2.9"/><path d="M995.8 561.8 C1001.8 561.8 1116.1 450.1 1122.1 450.1" fill="none" stroke="url(#e17)" stroke-width="2.9"/><path d="M995.8 688.2 C1001.8 688.2 1116.1 450.1 1122.1 450.1" fill="none" stroke="url(#e18)" stroke-width="2.9"/><path d="M995.8 814.6 C1001.8 814.6 1116.1 702.9 1122.1 702.9" fill="none" stroke="url(#e19)" stroke-width="2.9"/><path d="M995.8 941 C1001.8 941 1116.1 702.9 1122.1 702.9" fill="none" stroke="url(#e20)" stroke-width="2.9"/><path d="M995.8 1067.4 C1001.8 1067.4 1116.1 955.7 1122.1 955.7" fill="none" stroke="url(#e21)" stroke-width="2.9"/><path d="M995.8 1193.8 C1001.8 1193.8 1116.1 955.7 1122.1 955.7" fill="none" stroke="url(#e22)" stroke-width="2.9"/><path d="M995.8 1320.2 C1001.8 1320.2 1116.1 955.7 1122.1 955.7" fill="none" stroke="url(#e23)" stroke-width="2.9"/><path d="M1258.15 64.3 L1157.94 1245.7" fill="none" stroke="#1fd46c" stroke-width="2.9"/><circle cx="500.6" cy="189.5" r="5.4" fill="#00dc68"/><circle cx="500.6" cy="215.9" r="5.4" fill="#00dc68"/><circle cx="500.6" cy="242.3" r="5.4" fill="#00dc68"/><circle cx="500.6" cy="268.7" r="5.4" fill="#00dc68"/><circle cx="500.6" cy="568.9" r="5.4" fill="#00dc68"/><circle cx="500.6" cy="595.3" r="5.4" fill="#00dc68"/><circle cx="500.6" cy="621.7" r="5.4" fill="#00dc68"/><circle cx="500.6" cy="821.7" r="5.4" fill="#00dc68"/><circle cx="500.6" cy="848.1" r="5.4" fill="#00dc68"/><circle cx="500.6" cy="874.5" r="5.4" fill="#00dc68"/><circle cx="500.6" cy="1074.5" r="5.4" fill="#00dc68"/><circle cx="500.6" cy="1100.9" r="5.4" fill="#00dc68"/><circle cx="500.6" cy="1127.3" r="5.4" fill="#00dc68"/><circle cx="500.6" cy="1153.7" r="5.4" fill="#00dc68"/><circle cx="588.5" cy="454.9" r="5.4" fill="#f6f400"/><circle cx="588.5" cy="707.7" r="5.4" fill="#f6f400"/><circle cx="588.5" cy="960.5" r="5.4" fill="#f6f400"/><circle cx="826.6" cy="182.6" r="5.4" fill="#00dc68"/><circle cx="995.8" cy="182.6" r="5.4" fill="#00dc68"/><circle cx="826.6" cy="309" r="5.4" fill="#00dc68"/><circle cx="995.8" cy="309" r="5.4" fill="#00dc68"/><circle cx="826.6" cy="435.4" r="5.4" fill="#00dc68"/><circle cx="995.8" cy="435.4" r="5.4" fill="#00dc68"/><circle cx="826.6" cy="561.8" r="5.4" fill="#00dc68"/><circle cx="995.8" cy="561.8" r="5.4" fill="#00dc68"/><circle cx="826.6" cy="688.2" r="5.4" fill="#00dc68"/><circle cx="995.8" cy="688.2" r="5.4" fill="#00dc68"/><circle cx="826.6" cy="814.6" r="5.4" fill="#00dc68"/><circle cx="995.8" cy="814.6" r="5.4" fill="#00dc68"/><circle cx="826.6" cy="941" r="5.4" fill="#00dc68"/><circle cx="995.8" cy="941" r="5.4" fill="#00dc68"/><circle cx="826.6" cy="1067.4" r="5.4" fill="#00dc68"/><circle cx="995.8" cy="1067.4" r="5.4" fill="#00dc68"/><circle cx="826.6" cy="1193.8" r="5.4" fill="#00dc68"/><circle cx="995.8" cy="1193.8" r="5.4" fill="#00dc68"/><circle cx="1122.1" cy="450.1" r="5.4" fill="#f6f400"/><circle cx="1122.1" cy="702.9" r="5.4" fill="#f6f400"/><circle cx="1122.1" cy="955.7" r="5.4" fill="#f6f400"/></svg>
</div>
<div id="vline" class="abs"></div>
<div class="abs menu">
<div class="mi" style="top:19px">Add New World</div>
<div class="mi" style="top:57px">Add New UI</div>
<div class="abs" style="left:1px;top:86px;width:196.5px;height:38.3px;background:#575757"></div>
<div class="mi" style="top:95px;color:#ececec">Add New Redirect</div>
</div>
</body></html>
